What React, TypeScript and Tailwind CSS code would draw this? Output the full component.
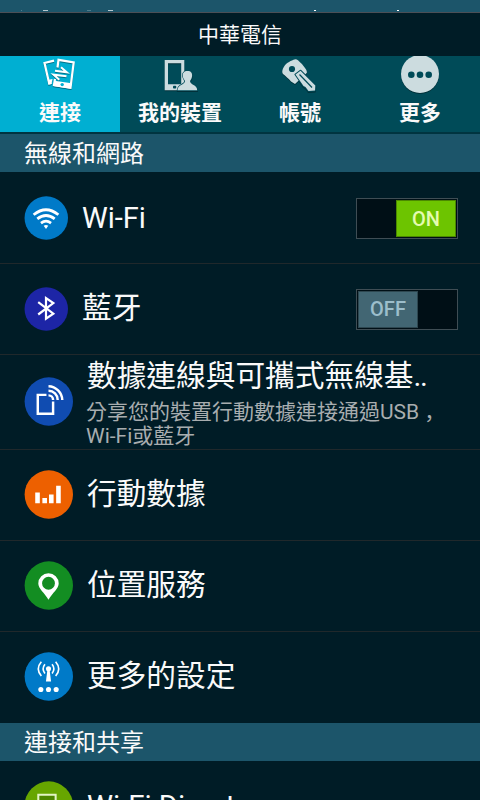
import type { ReactNode } from 'react';

const W = '#fff';

function Disc({ color, size, children }: { color: string; size: number; children: ReactNode }) {
  return (
    <svg width={size} height={size} viewBox="0 0 48 48" className={`block shrink-0 ${size > 44 ? 'mb-[2px]' : ''}`}>
      <circle cx="24.3" cy="24" r="23.7" fill={color} />
      {children}
    </svg>
  );
}

function Shade({ children }: { children: ReactNode }) {
  return (
    <svg width="40" height="40" viewBox="0 0 40 40" className="block drop-shadow-[0_1px_0.5px_rgba(0,0,0,0.35)]">
      {children}
    </svg>
  );
}

const ConnectIcon = () => (
  <Shade>
    <path d="M14 4.600 L4.500 7 L9.200 27.500 L11.500 27" fill="none" stroke={W} strokeWidth="2.200" />
    <path d="M7.800 24 L12.500 23 L11.500 28 L8.500 28.500Z" fill={W} />
    <path d="M17.500 11.500 L18.500 3.800 L33.700 6.500 L30.500 31.700 L14 29 L15 23" fill="none" stroke={W} strokeWidth="2.200" />
    <path d="M14.300 24.800 L31.500 27.300 L30.700 32.700 L13.200 30Z" fill={W} />
    <circle cx="22.200" cy="28.600" r="1.700" fill="#00afd2" />
    <path d="M15 14.800 L26.800 16.300 L21 11.300 M26.500 20.200 L13.500 18.700 L19.300 23.800" fill="none" stroke={W} strokeWidth="2" />
  </Shade>
);

const DeviceIcon = () => (
  <Shade>
    <path fillRule="evenodd" fill="#ccdcdf" d="M4.700 4 H24.300 V34.200 H4.700 Z M8 7.300 V28.300 H21.200 V7.300 Z" />
    <rect x="13" y="29.700" width="3.200" height="2.800" rx="0.800" fill="#004b58" />
    <path
      fill="#ccdcdf"
      stroke="#004b58"
      strokeWidth="1.4"
      style={{ paintOrder: 'stroke' }}
      d="M27.500 15 C31 15 32.500 17 32 20.500 C31.700 22.700 30.500 24 30 25 C30 29 37.200 28.500 37.200 34.200 H17.500 C17.500 28.500 25 29 25 25 C24 23.500 23 22 22.800 20 C22.500 17 24 15 27.500 15 Z"
    />
  </Shade>
);

const KeyIcon = () => (
  <Shade>
    <path fill="#ccdcdf" d="M13.500 3.700 Q16 2.500 18 4.300 C20 6.500 22 7.500 25 12 Q27.500 15 26.700 17 L15 28 L11 25.500 C8.500 22.500 5.500 20 3 18 Q1.500 16 3 12.500 C5.500 7 9.500 5.500 13.500 3.700Z" />
    <circle cx="12" cy="13" r="3.100" fill="#004b58" />
    <path d="M15.500 18.500 L20.500 14.800 L35.300 29.500 L35 34.500 L28.500 35 L25.500 31 L23.500 30 Z" fill="#ccdcdf" stroke="#004b58" strokeWidth="2" style={{ paintOrder: 'stroke' }} strokeLinejoin="round" />
    <path d="M19.500 18.500 L32 31.500" stroke="#004b58" strokeWidth="1.200" />
  </Shade>
);

const MoreIcon = () => (
  <Shade>
    <circle cx="20" cy="18" r="19" fill="#ccdcdf" />
    <g fill="#004b58">
      <circle cx="11.300" cy="18.700" r="3.300" />
      <circle cx="20" cy="18.700" r="3.300" />
      <circle cx="28.700" cy="18.700" r="3.300" />
    </g>
  </Shade>
);

function Tab({ icon, label, active = false }: { icon: ReactNode; label: string; active?: boolean }) {
  return (
    <div className={`flex h-[76px] w-[120px] flex-col items-center overflow-hidden ${active ? 'bg-[#00afd2]' : 'bg-[#004b58]'}`}>
      <div className="h-[40px]">{icon}</div>
      <div className="h-[34px] text-[21px] leading-[34px] font-bold whitespace-nowrap">{label}</div>
    </div>
  );
}

function Section({ label }: { label: string }) {
  return <div className="h-[38px] bg-[#1c556a] pl-[24px] text-[24px] leading-[40px]">{label}</div>;
}

function Switch({ on }: { on: boolean }) {
  return (
    <div className={`flex h-[41px] w-[102px] border border-[#3f4d54] bg-[#000f16] p-px ${on ? 'mt-px justify-end' : ''}`}>
      <div
        className={`flex h-[37px] w-[60px] items-center justify-center border border-black/30 text-[20px] font-medium ${
          on ? 'bg-[#6dc400] text-[#e4fbb0]' : 'bg-[#426673] text-[#9cbecb]'
        }`}
      >
        {on ? 'ON' : 'OFF'}
      </div>
    </div>
  );
}

interface RowProps {
  icon: ReactNode;
  label: string;
  right?: ReactNode;
  text?: string;
  last?: boolean;
}

function Row({ icon, label, right, text = 'pl-[14px] pb-[2px] text-[29.7px]', last = false }: RowProps) {
  return (
    <div className={`flex h-[91px] items-center border-b pr-[22px] pl-[24px] ${last ? 'border-transparent' : 'border-[#20282b]'}`}>
      {icon}
      <div className={`flex-1 leading-[44px] whitespace-nowrap ${text}`}>{label}</div>
      {right}
    </div>
  );
}

export default function App() {
  return (
    <div className="h-[800px] w-[480px] overflow-hidden bg-[#001c26] font-[Roboto,'Noto_Sans_CJK_TC',sans-serif] text-[#fafafa]">
      <div className="flex h-[13px] items-end border-b border-[#4b4f56] bg-[#1c556a]">
        <svg width="480" height="12" className="block">
          <g fill="#b5c8d0">
            <rect x="43" y="10" width="5" height="1" />
            <rect x="108" y="10" width="5" height="1" />
          </g>
          <g fill="#fff">
            <rect x="314" y="10" width="2" height="1" />
            <rect x="397" y="10" width="2" height="1" />
          </g>
          <g fill="#4f7d8c">
            <rect x="21" y="10" width="1" height="1" />
            <rect x="87" y="10" width="4" height="1" />
          </g>
        </svg>
      </div>
      <div className="h-[43px] text-center text-[21px] leading-[45px]">中華電信</div>
      <div className="flex h-[78px] border-b-2 border-[#003440]">
        <Tab active icon={<ConnectIcon />} label="連接" />
        <Tab icon={<DeviceIcon />} label="我的裝置" />
        <Tab icon={<KeyIcon />} label="帳號" />
        <Tab icon={<MoreIcon />} label="更多" />
      </div>
      <Section label="無線和網路" />
      <div className="h-px" />
      <Row
        text="pl-[14px] text-[29px]"
        label="Wi-Fi"
        right={<Switch on />}
        icon={
          <Disc color="#007ac8" size={44}>
            <g fill="none" stroke={W} strokeWidth="3">
              <path d="M10.500 20.500 Q24 9.500 37.500 20.500" />
              <path d="M14.500 25 Q24 17.500 33.500 25" />
              <path d="M18.500 29.500 Q24 25.500 29.500 29.500" />
            </g>
            <path d="M21.500 32.500 Q24 30.800 26.500 32.500 L24 36Z" fill={W} />
          </Disc>
        }
      />
      <Row
        text="pl-[14px] pb-[2px] text-[29.7px]"
        label="藍牙"
        right={<Switch on={false} />}
        icon={
          <Disc color="#1d25a6" size={44}>
            <path d="M15.500 16.500 L32 29 L24 34.500 V12 L32 17.500 L15.500 30" fill="none" stroke={W} strokeWidth="2.400" />
          </Disc>
        }
      />
      <div className="flex h-[95px] items-center border-b border-[#20282b] pl-[24px]">
        <Disc color="#104cb1" size={49}>
          <path d="M22 17.500 H13.500 V36 H28.500 V24" fill="none" stroke={W} strokeWidth="2.400" />
          <g fill="none" stroke={W} strokeWidth="2.400">
            <path d="M24 9 A14 14 0 0 1 37.500 22.500" />
            <path d="M24 13.500 A9 9 0 0 1 33 22.500" />
            <path d="M24 18 A4.500 4.500 0 0 1 28.500 22.500" />
          </g>
        </Disc>
        <div className="flex h-[95px] flex-col pl-[14px] whitespace-nowrap">
          <div className="h-[43px] text-[29.7px] leading-[41px]">
            數據連線與可攜式無線基<span className="tracking-[-1.5px]">..</span>
          </div>
          <div className="-ml-px text-[21px] leading-[24px] text-[#a8adaf]">
            分享您的裝置行動數據連接通過USB
            <span className="pl-[5px] font-['Noto_Sans_CJK_SC']" lang="zh-CN">，</span>
            <br />
            Wi-Fi或藍牙
          </div>
        </div>
      </div>
      <Row
        label="行動數據"
        icon={
          <Disc color="#ed6000" size={49}>
            <path fill={W} d="M11 22h4.500v10.500h-4.500z M18 27.500h4.500v5h-4.500z M24.500 24h4.500v8.500h-4.500z M31.500 15.500h4.500v17h-4.500z" />
          </Disc>
        }
      />
      <Row
        label="位置服務"
        icon={
          <Disc color="#138d22" size={49}>
            <path fillRule="evenodd" fill={W} d="M24 12 A10 10 0 0 0 14 22 C14 27 20 31 24 38 C28 31 34 27 34 22 A10 10 0 0 0 24 12Z M24 15.500 A6.300 6.300 0 1 1 24 28.100 A6.300 6.300 0 1 1 24 15.500Z" />
          </Disc>
        }
      />
      <Row
        last
        label="更多的設定"
        icon={
          <Disc color="#007ac8" size={49}>
            <circle cx="24" cy="16.500" r="2.500" fill={W} />
            <path d="M23 17h2l1.500 12h-5z" fill={W} />
            <g fill="none" stroke={W} strokeWidth="1.600">
              <path d="M20.500 12 Q17 16.500 20.500 21 M27.500 12 Q31 16.500 27.500 21 M17 9.500 Q11 16.500 17 23.500 M31 9.500 Q37 16.500 31 23.500" />
            </g>
            <circle cx="16.500" cy="36.700" r="2.500" fill={W} />
            <circle cx="24" cy="36.700" r="2.500" fill={W} />
            <circle cx="31.500" cy="36.700" r="2.500" fill={W} />
          </Disc>
        }
      />
      <Section label="連接和共享" />
      <Row
        text="pl-[14px] text-[29.3px]"
        label="Wi-Fi Direct"
        icon={
          <Disc color="#67a600" size={49}>
            <path d="M14 13.500 H31 V36 H14Z" fill="#4d8600" stroke="#e2f4c4" strokeWidth="2" />
          </Disc>
        }
      />
    </div>
  );
}
